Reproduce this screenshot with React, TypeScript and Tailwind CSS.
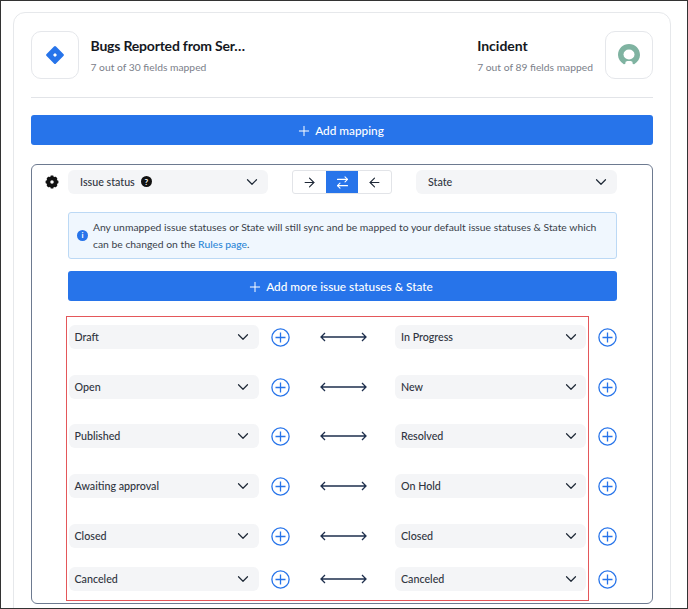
import React from 'react';
import { ChevronDown, Plus, ArrowRight, ArrowLeft, ArrowRightLeft } from 'lucide-react';

const rows = [
  { left: 'Draft', right: 'In Progress', gap: 'mt-0' },
  { left: 'Open', right: 'New', gap: 'mt-[26px]' },
  { left: 'Published', right: 'Resolved', gap: 'mt-[25px]' },
  { left: 'Awaiting approval', right: 'On Hold', gap: 'mt-[26px]' },
  { left: 'Closed', right: 'Closed', gap: 'mt-[26px]' },
  { left: 'Canceled', right: 'Canceled', gap: 'mt-[19px]' },
];

const Select = ({ label, className, children }: { label: string; className: string; children?: React.ReactNode }) => (
  <div className={`flex h-6 items-center justify-between rounded-md bg-[#f4f5f7] text-[10.7px] font-medium text-[#2f3440] ${className}`}>
    <span className="flex items-center gap-[6px]">
      {label}
      {children}
    </span>
    <ChevronDown className="h-[18px] w-[18px] text-[#1f2937]" strokeWidth={1.6} />
  </div>
);

const PlusCircle = () => (
  <svg className="h-[19px] w-[19px] shrink-0 text-[#2774ea]" viewBox="0 0 19 19" fill="none" stroke="currentColor" strokeWidth={1.3}>
    <circle cx="9.5" cy="9.5" r="8.6" />
    <path d="M9.5 4.5v10M4.5 9.5h10" />
  </svg>
);

const LongArrow = () => (
  <svg className="h-[10px] w-[47px] shrink-0 text-[#1e2f4d]" viewBox="0 0 47 10" fill="none" stroke="currentColor" strokeWidth={1.3}>
    <path d="M1 5h45M5 1 1 5l4 4M42 1l4 4-4 4" />
  </svg>
);

const Logo = ({ children }: { children: React.ReactNode }) => (
  <div className="flex h-12 w-12 shrink-0 items-center justify-center rounded-[10px] border border-[#e5e7eb]">{children}</div>
);

const App = () => {
  return (
    <div className="h-[609px] w-[688px] overflow-hidden border border-[#333333] bg-white pl-3 pt-[11px] font-['Lato',sans-serif]">
      <div className="h-[640px] w-[658px] rounded-t-xl border border-[#e6e8eb] px-[17px] pt-[18px]">
        {/* Header */}
        <div className="flex h-[48px] items-center justify-between">
          <div className="flex items-center gap-[11.5px]">
            <Logo>
              <svg className="h-[18px] w-[18px]" viewBox="0 0 18 18">
                <path d="M8 .6a1.4 1.4 0 0 1 2 0L17.400 8a1.4 1.4 0 0 1 0 2L10 17.400a1.400 1.400 0 0 1-2 0L.6 10a1.400 1.400 0 0 1 0-2Z" fill="#2774ea" />
                <path d="M9 7 11 9 9 11 7 9Z" fill="white" />
              </svg>
            </Logo>
            <div>
              <div className="text-sm font-bold leading-[20px] tracking-[-0.2px] text-[#15181e]">Bugs Reported from Ser…</div>
              <div className="mt-[4px] text-[10.3px] leading-[14px] text-[#7b808a]">7 out of 30 fields mapped</div>
            </div>
          </div>
          <div className="flex items-center gap-3">
            <div>
              <div className="text-sm font-bold leading-[20px] text-[#15181e]">Incident</div>
              <div className="mt-[4px] text-[10.3px] leading-[14px] text-[#7b808a]">7 out of 89 fields mapped</div>
            </div>
            <Logo>
              <svg className="h-[24px] w-[24px]" viewBox="0 0 24 24">
                <path d="M6.500 21C3.500 19 1 16 1 12 1 5.500 6 1 12 1s11 4.500 11 11c0 4-2.500 7-5.500 9-1.200.8-2.300-.6-2-1.500.2-1-.9-1.500-3.500-1.500s-3.700.5-3.500 1.500c.3.900-.8 2.300-2 1.500Z" fill="#7fb3a1" />
                <ellipse cx="12" cy="11.500" rx="5.500" ry="5" fill="white" />
              </svg>
            </Logo>
          </div>
        </div>

        <div className="mt-[18px] h-px bg-[#e2e4e8]" />

        <button className="mt-[17px] flex h-[30px] w-full items-center justify-center gap-[3px] rounded-[3px] bg-[#2774ea] pr-1 pt-px text-[11.8px] font-medium text-white">
          <Plus className="h-4 w-4" strokeWidth={1.5} />
          Add mapping
        </button>

        {/* Mapping panel */}
        <div className="mt-[19px] h-[440px] rounded-md border border-[#6d7a90] pl-[36px] pr-[35px] pt-[5px]">
          <div className="relative flex h-[24px] items-center">
            <svg className="absolute -left-[23px] top-[5px] h-[14px] w-[14px] text-[#111111]" viewBox="0 0 24 24" fill="none" stroke="currentColor" strokeWidth={7}>
              <circle cx="12" cy="12" r="6.500" />
              <path d="M12 1v4M12 19v4M1 12h4M19 12h4M4.200 4.200l2.800 2.800M17 17l2.800 2.800M19.800 4.200 17 7M7 17l-2.800 2.800" strokeWidth={4.500} />
            </svg>
            <Select label="Issue status" className="w-[200px] pl-3 pr-[7px]">
              <span className="flex h-[11px] w-[11px] items-center justify-center rounded-full bg-[#111111] text-[8px] font-bold text-white">?</span>
            </Select>
            <div className="ml-6 flex h-[24px] w-[100px] overflow-hidden rounded-[3px] border border-[#e2e4e8]">
              <div className="flex flex-1 items-center justify-center text-[#1f2937]">
                <ArrowRight className="h-[15px] w-[15px]" strokeWidth={1.8} />
              </div>
              <div className="flex flex-1 items-center justify-center bg-[#2774ea] text-white">
                <ArrowRightLeft className="h-[15px] w-[15px]" strokeWidth={1.8} />
              </div>
              <div className="flex flex-1 items-center justify-center text-[#1f2937]">
                <ArrowLeft className="h-[15px] w-[15px]" strokeWidth={1.8} />
              </div>
            </div>
            <Select label="State" className="ml-6 w-[201px] pl-3 pr-[7px]" />
          </div>

          <div className="mt-[18px] flex h-[47px] items-center gap-[5px] rounded-[3px] border border-[#bcd9f5] bg-[#f0f7fe] pl-[8px] pr-2 text-[10.35px] leading-[17px] text-[#3a3f4a]">
            <span className="flex h-[11px] w-[11px] shrink-0 items-center justify-center rounded-full bg-[#2774ea] text-[8px] font-bold text-white">i</span>
            <p>
              Any unmapped issue statuses or State will still sync and be mapped to your default issue statuses &amp; State which can be changed on the{' '}
              <span className="font-medium text-[#2b86d6]">Rules page</span>.
            </p>
          </div>

          <button className="mt-3 flex h-[30px] w-full items-center justify-center gap-[3px] rounded-[3px] bg-[#2774ea] pr-[5px] pt-px text-[11.8px] font-medium text-white">
            <Plus className="h-4 w-4" strokeWidth={1.5} />
            Add more issue statuses &amp; State
          </button>

          {/* Value rows, red box is an annotation on top */}
          <div className="relative mt-[24px]">
            <div className="pointer-events-none absolute -left-[2px] -top-[9px] h-[285px] w-[523px] border border-[#e4575a]" />
            {rows.map((row) => (
              <div key={row.left} className={`flex h-6 items-center ${row.gap}`}>
                <Select label={row.left} className="ml-[1px] w-[190px] pl-[5.5px] pr-[7px]" />
                <div className="ml-3"><PlusCircle /></div>
                <div className="ml-[30px]"><LongArrow /></div>
                <Select label={row.right} className="ml-[28px] w-[191px] pl-[6px] pr-[6px]" />
                <div className="ml-[12px]"><PlusCircle /></div>
              </div>
            ))}
          </div>
        </div>
      </div>
    </div>
  );
};

export default App;
